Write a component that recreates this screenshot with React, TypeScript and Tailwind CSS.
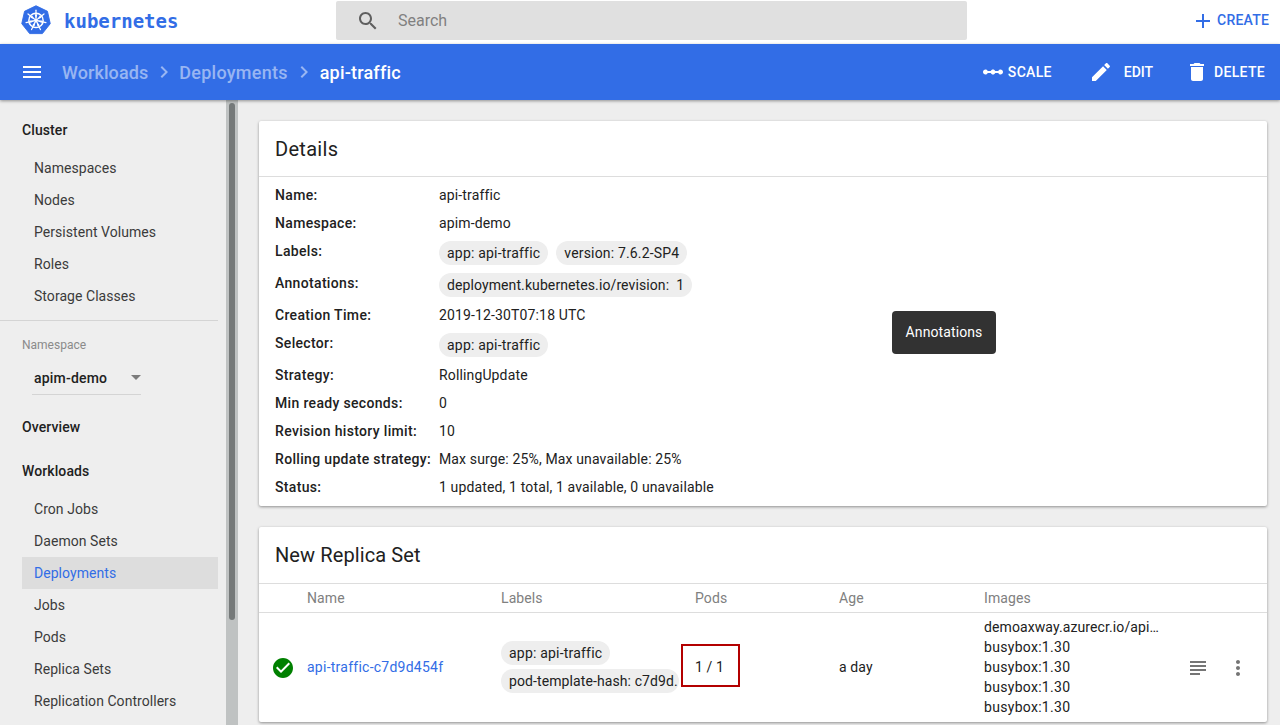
import React from "react";

const P = {
  search: "M15.5 14h-.79l-.28-.27C15.41 12.59 16 11.11 16 9.5 16 5.91 13.09 3 9.5 3S3 5.91 3 9.5 5.91 16 9.5 16c1.61 0 3.09-.59 4.23-1.57l.27.28v.79l5 4.99L20.49 19l-4.99-5zm-6 0C7.01 14 5 11.99 5 9.5S7.01 5 9.5 5 14 7.01 14 9.5 11.99 14 9.5 14z",
  add: "M19 13h-6v6h-2v-6H5v-2h6V5h2v6h6v2z",
  menu: "M3 18h18v-2H3v2zm0-5h18v-2H3v2zm0-7v2h18V6H3z",
  edit: "M3 17.25V21h3.75L17.81 9.94l-3.75-3.75L3 17.25zM20.71 7.04c.39-.39.39-1.02 0-1.41l-2.34-2.34c-.39-.39-1.02-.39-1.41 0l-1.83 1.83 3.75 3.75 1.83-1.83z",
  del: "M6 19c0 1.1.9 2 2 2h8c1.1 0 2-.9 2-2V7H6v12zM19 4h-3.5l-1-1h-5l-1 1H5v2h14V4z",
  chev: "M10 6L8.59 7.41 13.17 12l-4.58 4.59L10 18l6-6z",
  check: "M12 2C6.48 2 2 6.48 2 12s4.48 10 10 10 10-4.48 10-10S17.52 2 12 2zm-2 15l-5-5 1.41-1.41L10 14.17l7.59-7.59L19 8l-9 9z",
  subject: "M14 17H4v2h10v-2zm6-8H4v2h16V9zM4 15h16v-2H4v2zM4 5v2h16V5H4z",
  more: "M12 8c1.1 0 2-.9 2-2s-.9-2-2-2-2 .9-2 2 .9 2 2 2zm0 2c-1.1 0-2 .9-2 2s.9 2 2 2 2-.9 2-2-.9-2-2-2zm0 6c-1.1 0-2 .9-2 2s.9 2 2 2 2-.9 2-2-.9-2-2-2z",
  scale: "M19.5 9.5c-1.03 0-1.9.62-2.29 1.5h-2.92c-.39-.88-1.26-1.5-2.29-1.5s-1.9.62-2.29 1.5H6.79c-.39-.88-1.26-1.5-2.29-1.5C3.12 9.5 2 10.62 2 12s1.12 2.5 2.5 2.5c1.03 0 1.9-.62 2.29-1.5h2.92c.39.88 1.26 1.5 2.29 1.5s1.9-.62 2.29-1.5h2.92c.39.88 1.26 1.5 2.29 1.5 1.38 0 2.5-1.12 2.5-2.5s-1.12-2.5-2.5-2.5z",
};

function Icon({ d, className }: { d: string; className?: string }) {
  return (
    <svg viewBox="0 0 24 24" className={className} fill="currentColor">
      <path d={d} />
    </svg>
  );
}

function Logo() {
  const spokes = [0, 51.4, 102.9, 154.3, 205.7, 257.1, 308.6];
  return (
    <svg viewBox="0 0 32 32" className="w-[30px] h-[30px] shrink-0 -mt-[4px]">
      <path d="M16 .8 L28.2 6.7 L31.2 19.9 L22.8 30.5 L9.2 30.5 L.8 19.9 L3.8 6.7 Z" fill="#326de6" stroke="#326de6" strokeWidth="1" strokeLinejoin="round" />
      <circle cx="16" cy="16.4" r="7.6" fill="none" stroke="#fff" strokeWidth="1.6" />
      {spokes.map((a) => (
        <g key={a} transform={`rotate(${a} 16 16.4)`}>
          <path d="M16 16.4 L16 5.5" stroke="#fff" strokeWidth="1.3" strokeLinecap="round" />
          <path d="M16 14.5 L14.6 10 L17.4 10 Z" fill="#fff" />
        </g>
      ))}
      <circle cx="16" cy="16.4" r="1.6" fill="#fff" />
    </svg>
  );
}

function Chip({ children, className }: { children: React.ReactNode; className?: string }) {
  return (
    <span className={`inline-block h-[24px] leading-[24px] px-[8px] rounded-[12px] bg-[#eeeeee] text-[14px] text-[#212121] whitespace-nowrap overflow-hidden ${className ?? "tracking-[0.2px]"}`}>
      {children}
    </span>
  );
}

function Row({ label, children, h = "h-[28px]" }: { label: string; children: React.ReactNode; h?: string }) {
  return (
    <div className={`flex items-center ${h}`}>
      <div className="w-[164px] shrink-0 font-medium text-[14px] text-[#212121] tracking-[0.33px]">{label}</div>
      <div className="flex gap-[8px] text-[14px] text-[#212121] tracking-[0.14px]">{children}</div>
    </div>
  );
}

function ChipRow({ label, children }: { label: string; children: React.ReactNode }) {
  return (
    <div className="flex h-[32px] pt-[0px]">
      <div className="w-[164px] shrink-0 font-medium text-[14px] leading-[28px] text-[#212121] tracking-[0.33px]">{label}</div>
      <div className="flex gap-[8px] pt-[4px]">{children}</div>
    </div>
  );
}

function NavItem({ children, active }: { children: string; active?: boolean }) {
  return (
    <div
      className={`h-[32px] leading-[32px] pl-[12px] ml-[22px] mr-[8px] text-[14px] tracking-[0.05px] ${
        active ? "bg-[#dddddd] text-[#326de6]" : "text-[#3b3b3b]"
      }`}
    >
      {children}
    </div>
  );
}

function NavHead({ children, className }: { children: string; className?: string }) {
  return <div className={`pl-[22px] font-medium text-[14px] text-[#212121] tracking-[0.1px] ${className ?? ""}`}>{children}</div>;
}

function Sidebar() {
  return (
    <aside className="w-[238px] h-full shrink-0 flex bg-[#eeeeee] overflow-hidden">
      <div className="w-[226px] shrink-0 pt-[20px]">
        <NavHead className="h-[20px] leading-[20px] mb-[12px]">Cluster</NavHead>
        {["Namespaces", "Nodes", "Persistent Volumes", "Roles", "Storage Classes"].map((n) => (
          <NavItem key={n}>{n}</NavItem>
        ))}
        <div className="h-px bg-[#d4d4d4] mr-[8px] mt-[8px]" />
        <div className="pl-[22px] pt-[16px] h-[24px] box-content leading-[16px] text-[12px] text-[#8a8a8a]">Namespace</div>
        <div className="ml-[32px] w-[109px] h-[34px] flex items-center justify-between border-b border-[#d4d4d4] pl-[2px] pt-[2px]">
          <span className="font-medium text-[14px] text-[#212121] tracking-[0.2px]">apim-demo</span>
          <span className="w-0 h-0 border-x-[5px] border-x-transparent border-t-[5px] border-t-[#7b7b7b] -mt-[2px]" />
        </div>
        <NavHead className="h-[20px] leading-[20px] mt-[22px]">Overview</NavHead>
        <NavHead className="h-[20px] leading-[20px] mt-[24px] mb-[12px]">Workloads</NavHead>
        {["Cron Jobs", "Daemon Sets"].map((n) => (
          <NavItem key={n}>{n}</NavItem>
        ))}
        <NavItem active>Deployments</NavItem>
        {["Jobs", "Pods", "Replica Sets", "Replication Controllers"].map((n) => (
          <NavItem key={n}>{n}</NavItem>
        ))}
      </div>
      <div className="w-[12px] h-full bg-[#bfc2c2] pt-[3px] px-[3px]">
        <div className="w-[6px] h-[517px] bg-[#757979] rounded-[3px]" />
      </div>
    </aside>
  );
}

function Details() {
  return (
    <section className="bg-white shadow-[0_1px_3px_rgba(0,0,0,0.4)] rounded-[2px]">
      <div className="h-[55px] leading-[56px] px-[16px] border-b border-[#dddddd] text-[20px] text-[#212121] box-content tracking-[0.3px]">Details</div>
      <div className="pl-[16px] pt-[4px] pb-[5px]">
        <Row label="Name:">api-traffic</Row>
        <Row label="Namespace:">apim-demo</Row>
        <ChipRow label="Labels:">
          <Chip>app: api-traffic</Chip>
          <Chip className="tracking-[0.17px]">version: 7.6.2-SP4</Chip>
        </ChipRow>
        <ChipRow label="Annotations:">
          <Chip className="tracking-[0.1px]">deployment.kubernetes.io/revision:&nbsp; 1</Chip>
        </ChipRow>
        <Row label="Creation Time:">2019-12-30T07:18 UTC</Row>
        <ChipRow label="Selector:">
          <Chip>app: api-traffic</Chip>
        </ChipRow>
        <Row label="Strategy:">RollingUpdate</Row>
        <Row label="Min ready seconds:">0</Row>
        <Row label="Revision history limit:">10</Row>
        <Row label="Rolling update strategy:">Max surge: 25%, Max unavailable: 25%</Row>
        <Row label="Status:">1 updated, 1 total, 1 available, 0 unavailable</Row>
      </div>
    </section>
  );
}

function ReplicaSet() {
  const cols = "grid grid-cols-[48px_194px_194px_144px_145px_1fr]";
  return (
    <section className="bg-white shadow-[0_1px_3px_rgba(0,0,0,0.4)] rounded-[2px] mt-[21px]">
      <div className="h-[56px] leading-[56px] px-[16px] border-b border-[#dddddd] text-[20px] text-[#212121] box-content tracking-[0.1px]">New Replica Set</div>
      <div className={`${cols} h-[28px] leading-[28px] border-b border-[#dddddd] box-content text-[14px] text-[#808080] tracking-[0.1px]`}>
        <div />
        <div>Name</div>
        <div>Labels</div>
        <div>Pods</div>
        <div>Age</div>
        <div>Images</div>
      </div>
      <div className={`${cols} h-[109px] items-center text-[14px] text-[#212121] tracking-[0.1px]`}>
        <div className="pl-[12px]">
          <Icon d={P.check} className="w-[24px] h-[24px] text-[#008000]" />
        </div>
        <div className="text-[#326de6] tracking-[0.25px]">api-traffic-c7d9d454f</div>
        <div className="flex flex-col items-start gap-[4px] w-[178px] -mt-[2px]">
          <Chip>app: api-traffic</Chip>
          <span className="w-[178px] block">
            <span className="block h-[24px] leading-[24px] pl-[8px] rounded-[12px] bg-[#eeeeee] whitespace-nowrap overflow-hidden">pod-template-hash: c7d9d.</span>
          </span>
        </div>
        <div className="relative">
          <span>1 / 1</span>
          <div className="absolute left-[-14px] top-[-13px] w-[59px] h-[43px] border-2 border-[#b30000]" />
        </div>
        <div>a day</div>
        <div className="flex items-center">
          <div className="w-[178px] shrink-0 leading-[20px] -mt-[2px]">
            <div className="truncate">demoaxway.azurecr.io/api…</div>
            <div className="tracking-[0.3px]">busybox:1.30</div>
            <div className="tracking-[0.3px]">busybox:1.30</div>
            <div className="tracking-[0.3px]">busybox:1.30</div>
            <div className="tracking-[0.3px]">busybox:1.30</div>
          </div>
          <Icon d={P.subject} className="w-[24px] h-[24px] text-[#757575] ml-[24px] shrink-0" />
          <Icon d={P.more} className="w-[24px] h-[24px] text-[#757575] ml-[16px] shrink-0" />
        </div>
      </div>
    </section>
  );
}

export default function App() {
  return (
    <div className="relative w-[1280px] h-[725px] overflow-hidden flex flex-col bg-[#eeeeee] font-['Roboto',sans-serif]">
      <header className="h-[44px] shrink-0 bg-white flex items-center">
        <div className="w-[336px] shrink-0 flex items-center pl-[21px] gap-[13px]">
          <Logo />
          <span className="font-['DejaVu_Sans_Mono',monospace] font-bold text-[19px] text-[#326de6] -mt-[2px]">kubernetes</span>
        </div>
        <div className="w-[631px] h-[39px] -mt-[3px] bg-[#e0e0e0] rounded-[2px] flex items-center pl-[20px] gap-[18px]">
          <Icon d={P.search} className="w-[24px] h-[24px] text-[#5f5f5f]" />
          <span className="text-[16px] text-[#808080]">Search</span>
        </div>
        <div className="flex-1 flex items-center justify-end pr-[11px] gap-[3px] text-[#326de6] -mt-[3px]">
          <Icon d={P.add} className="w-[24px] h-[24px] -mr-[1px]" />
          <span className="text-[14px] font-medium tracking-[0.2px]">CREATE</span>
        </div>
      </header>
      <div className="h-[56px] shrink-0 bg-[#326de6] flex items-center text-white shadow-[0_1px_3px_rgba(0,0,0,0.4)] relative z-10">
        <Icon d={P.menu} className="w-[24px] h-[24px] ml-[20px]" />
        <div className="flex items-center ml-[18px] text-[18px] font-medium">
          <span className="text-white/50 tracking-[0.1px]">Workloads</span>
          <Icon d={P.chev} className="w-[24px] h-[24px] text-white/50 ml-[4px] mr-[3px]" />
          <span className="text-white/50 tracking-[0.25px]">Deployments</span>
          <Icon d={P.chev} className="w-[24px] h-[24px] text-white/50 mx-[4px]" />
          <span className="mt-[1px] tracking-[0.2px]">api-traffic</span>
        </div>
        <div className="flex-1 flex items-center justify-end pr-[15px] text-[14px] font-medium tracking-[0.3px]">
          <Icon d={P.scale} className="w-[24px] h-[24px]" />
          <span className="ml-[3px]">SCALE</span>
          <Icon d={P.edit} className="w-[24px] h-[24px] ml-[37px]" />
          <span className="ml-[11px] tracking-[0px]">EDIT</span>
          <Icon d={P.del} className="w-[24px] h-[24px] ml-[32px]" />
          <span className="ml-[5px]">DELETE</span>
        </div>
      </div>
      <div className="flex-1 min-h-0 flex">
        <Sidebar />
        <main className="flex-1 pl-[21px] pr-[13px] pt-[21px]">
          <Details />
          <ReplicaSet />
        </main>
      </div>
      <div className="absolute left-[892px] top-[311px] w-[104px] h-[43px] rounded-[4px] bg-[#323232] text-white text-[14px] flex items-center justify-center tracking-[0.1px]">
        Annotations
      </div>
    </div>
  );
}
